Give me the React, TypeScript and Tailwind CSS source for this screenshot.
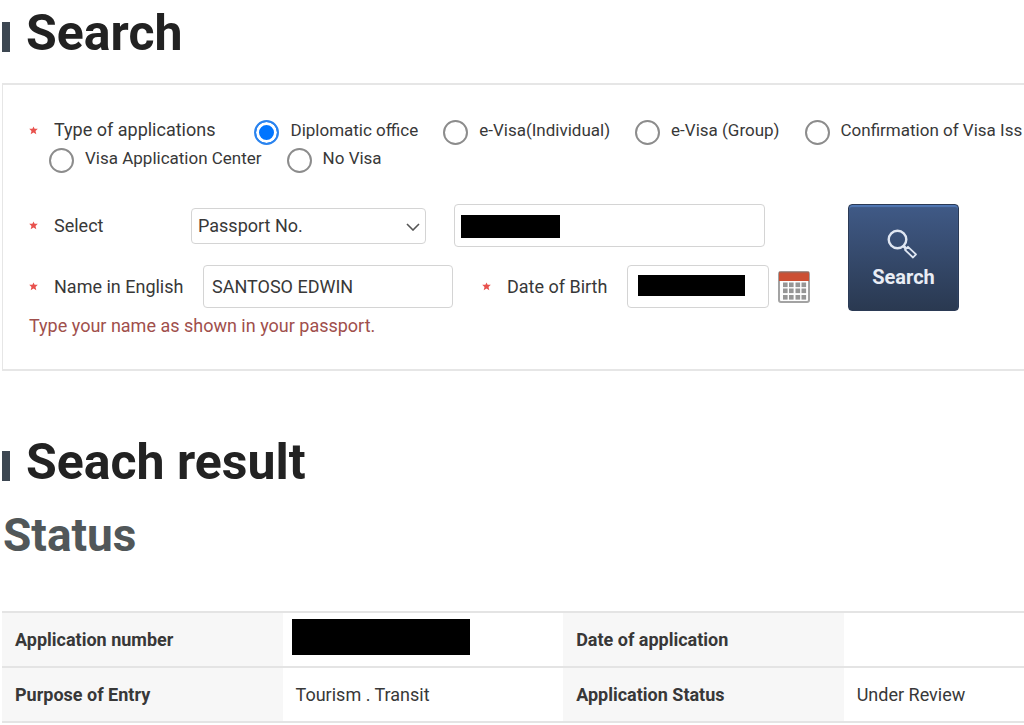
import { ReactNode, useState } from "react";

const firstRow = [
  { id: "office", name: "Diplomatic office" },
  { id: "individual", name: "e-Visa(Individual)" },
  { id: "group", name: "e-Visa (Group)" },
  { id: "issuance", name: "Confirmation of Visa Iss" },
];

const secondRow = [
  { id: "center", name: "Visa Application Center" },
  { id: "none", name: "No Visa" },
];

interface RadioProps {
  id: string;
  name: string;
  checked: boolean;
  onSelect: (id: string) => void;
}

function Radio({ id, name, checked, onSelect }: RadioProps) {
  return (
    <label className="flex h-7 shrink-0 items-center gap-[11px] whitespace-nowrap text-[17px] leading-7">
      <input
        type="radio"
        name="type"
        checked={checked}
        onChange={() => onSelect(id)}
        className="mt-1 size-[25px] shrink-0 appearance-none rounded-full border-2 border-[#8c8c8c] bg-white checked:border-[#2a83ee] checked:bg-[#0075ff] checked:shadow-[inset_0_0_0_3px_white]"
      />
      {name}
    </label>
  );
}

function Required() {
  return (
    <svg viewBox="0 0 9 9" className="mr-4 size-[9px] shrink-0" aria-hidden="true">
      <path
        d="M4.5 0.5 L5.6 2.8 L8.8 2.8 L6.5 5 L7.3 8.3 L4.5 6.6 L1.7 8.3 L2.5 5 L0.2 2.8 L3.4 2.8 Z"
        fill="#e8524e"
      />
    </svg>
  );
}

function Title({ children }: { children: ReactNode }) {
  return (
    <h1 className="flex items-center gap-4 pl-[2px] text-[50px] leading-[60px] font-bold text-[#222222]">
      <span className="mt-[7px] h-[30px] w-2 bg-[#3d4752]" />
      {children}
    </h1>
  );
}

function CalendarIcon() {
  return (
    <svg viewBox="0 0 32 32" className="size-8" aria-hidden="true">
      <rect x="1" y="1" width="30" height="30" rx="2" fill="#fdfdfd" stroke="#a3a3a3" strokeWidth="2" />
      <path d="M1 10V2.500Q1 1 2.500 1h27Q31 1 31 2.500V10z" fill="#cc4f33" />
      <path d="M1 1.500h30" stroke="#a8614f" strokeWidth="1.500" />
      {[11.5, 17.5, 24].map((y) =>
        [5, 11, 17.5, 23.5].map((x) => (
          <rect key={`${x}-${y}`} x={x} y={y} width="4.600" height="4.600" fill="#969696" />
        ))
      )}
    </svg>
  );
}

function SearchIcon() {
  return (
    <svg viewBox="0 0 30 30" className="mr-1 size-[30px]" fill="none" stroke="#dfe6f2" aria-hidden="true">
      <circle cx="10.500" cy="10.500" r="8.800" strokeWidth="2.400" />
      <path d="M16.500 17l2.500 2.500" strokeWidth="3" />
      <path d="M18 20.800l3-3 8 7.500-3 3.200z" strokeWidth="1.800" strokeLinejoin="round" />
    </svg>
  );
}

function App() {
  const [type, setType] = useState<string>("office");
  const [fullname, setFullname] = useState<string>("SANTOSO EDWIN");

  return (
    <div className="overflow-hidden bg-white font-[Roboto,sans-serif] text-[#383838]">
      <div className="pt-[3px]">
        <Title>Search</Title>
      </div>

      <form
        className="mt-5 ml-[2px] border-y-2 border-l border-[#e6e6e6] pt-[31px] pb-[29px] pl-[26px]"
        onSubmit={(e) => e.preventDefault()}
      >
        <fieldset>
          <div className="flex items-center">
            <Required />
            <span className="mr-9 shrink-0 text-lg leading-7">Type of applications</span>
            <div className="flex gap-[25px] pl-[3px]">
              {firstRow.map((item) => (
                <Radio key={item.id} {...item} checked={type === item.id} onSelect={setType} />
              ))}
            </div>
          </div>
          <div className="flex gap-[25px] pl-5">
            {secondRow.map((item) => (
              <Radio key={item.id} {...item} checked={type === item.id} onSelect={setType} />
            ))}
          </div>
        </fieldset>

        <div className="mt-8 flex items-start">
          <div className="w-[819px] shrink-0">
            <div className="flex items-center">
              <Required />
              <label htmlFor="kind" className="w-[137px] text-lg">
                Select
              </label>
              <div className="relative mr-7">
                <select
                  id="kind"
                  className="block h-9 w-[235px] appearance-none rounded-sm border border-[#d4d4d4] bg-white pl-[6px] text-lg leading-7"
                >
                  <option>Passport No.</option>
                  <option>Application No.</option>
                </select>
                <svg
                  viewBox="0 0 14 8"
                  className="pointer-events-none absolute top-[15px] right-[6px] h-2 w-[14px]"
                  fill="none"
                  stroke="#555555"
                  strokeWidth="1.600"
                >
                  <path d="M1 1l6 6 6-6" />
                </svg>
              </div>
              <div className="relative">
                <input
                  type="text"
                  aria-label="Passport No."
                  className="block h-[43px] w-[311px] rounded-sm border border-[#d4d4d4] px-2 text-lg"
                />
                <span className="absolute top-[11px] left-[7px] h-[23px] w-[99px] bg-black" />
              </div>
            </div>

            <div className="mt-[18px] flex items-center">
              <Required />
              <label htmlFor="fullname" className="w-[149px] text-lg">
                Name in English
              </label>
              <input
                id="fullname"
                type="text"
                value={fullname}
                onChange={(e) => setFullname(e.target.value)}
                className="mr-[29px] h-[43px] w-[250px] rounded-sm border border-[#d4d4d4] px-2 text-lg"
              />
              <Required />
              <label htmlFor="birth" className="w-[120px] text-lg">
                Date of Birth
              </label>
              <div className="relative mr-[9px]">
                <input
                  id="birth"
                  type="text"
                  className="block h-[43px] w-[142px] rounded-sm border border-[#d4d4d4] px-2 text-lg"
                />
                <span className="absolute top-[10px] left-[11px] h-[21px] w-[107px] bg-black" />
              </div>
              <button type="button" aria-label="Open calendar">
                <CalendarIcon />
              </button>
            </div>

            <p className="mt-1 text-lg leading-7 text-[#a04f4c]">
              Type your name as shown in your passport.
            </p>
          </div>

          <button
            type="submit"
            className="flex h-[107px] w-[111px] shrink-0 flex-col items-center justify-center gap-1 rounded-sm border border-[#2b3a55] bg-linear-to-b from-[#405a87] to-[#2a3951] pt-1 text-xl leading-7 font-bold text-[#e9edf5] shadow-[inset_0_2px_1px_#5077b4]"
          >
            <SearchIcon />
            Search
          </button>
        </div>
      </form>

      <div className="mt-[61px]">
        <Title>Seach result</Title>
      </div>
      <h2 className="mt-[15px] pl-[3px] text-[46px] leading-[56px] font-bold text-[#515759]">
        Status
      </h2>

      <table className="mt-12 ml-[2px] w-full table-fixed border-collapse text-left text-lg">
        <colgroup>
          <col className="w-[27.4%]" />
          <col className="w-[27.4%]" />
          <col className="w-[27.4%]" />
          <col />
        </colgroup>
        <tbody>
          <tr className="h-[55px] border-y-2 border-[#e4e4e4]">
            <th className="bg-[#f7f7f7] pl-[13px]">Application number</th>
            <td className="pt-[6px] pl-[9px] align-top">
              <div className="h-9 w-[178px] bg-black" />
            </td>
            <th className="bg-[#f7f7f7] pl-[13px]">Date of application</th>
            <td></td>
          </tr>
          <tr className="h-[55px] border-y-2 border-[#e4e4e4]">
            <th className="bg-[#f7f7f7] pl-[13px]">Purpose of Entry</th>
            <td className="pl-[13px]">Tourism . Transit</td>
            <th className="bg-[#f7f7f7] pl-[13px]">Application Status</th>
            <td className="pl-[13px]">Under Review</td>
          </tr>
        </tbody>
      </table>
    </div>
  );
}

export default App;
